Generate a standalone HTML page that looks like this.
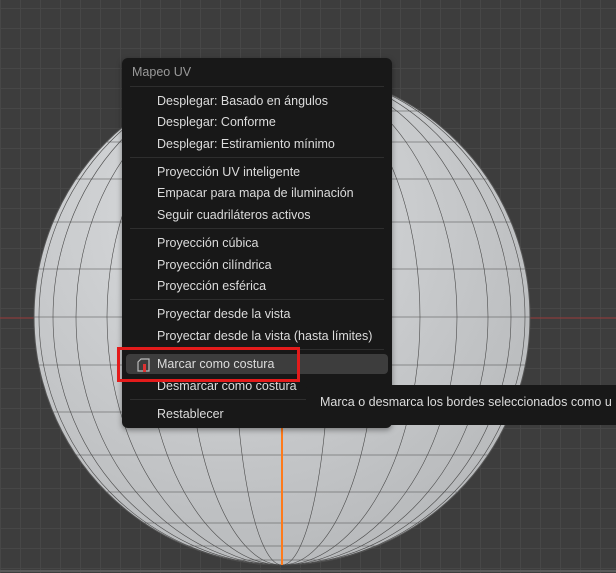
<!DOCTYPE html>
<html><head><meta charset="utf-8"><style>
html,body{margin:0;padding:0}
body{width:616px;height:573px;overflow:hidden;position:relative;background:#3d3d3d;font-family:"Liberation Sans","DejaVu Sans",sans-serif;
background-image:linear-gradient(#474747 1px,transparent 1px),linear-gradient(90deg,#474747 1px,transparent 1px);background-size:20px 20px;background-position:0 8px}
svg{position:absolute;left:0;top:0}
.menu{position:absolute;left:122px;top:58px;width:270px;height:370px;background:#181818;border-radius:6px;box-shadow:0 2px 6px rgba(0,0,0,.4)}
.t{position:absolute;left:10px;top:7px;font-size:12.5px;color:#9a9a9a}
.it{position:absolute;left:35px;font-size:12.5px;color:#dcdcdc;line-height:16px}
.sep{position:absolute;left:8px;right:8px;height:1px;background:#2e2e2e}
.hl{position:absolute;left:4px;right:4px;top:296px;height:20px;background:#3d3d3d;border-radius:4px}
.red{position:absolute;left:117px;top:347px;width:177px;height:29px;border:3px solid #e31b1b}
.tip{position:absolute;left:306px;top:385px;width:320px;height:40px;background:#181818;border-radius:5px;font-size:12.5px;color:#dcdcdc}
.tip span{position:absolute;left:14px;top:10px;white-space:nowrap}
</style></head><body>
<svg width="616" height="573">
<defs><radialGradient id="g" cx="0.4" cy="0.3" r="0.8"><stop offset="0" stop-color="#dcdee0"/><stop offset="1" stop-color="#b4b6b8"/></radialGradient></defs>
<line x1="0" y1="318" x2="616" y2="318" stroke="#9a3a3a" stroke-width="1"/>
<circle cx="282" cy="317" r="248" fill="url(#g)" stroke="#555" stroke-width="1"/>
<g fill="none" stroke="#4a4a4a" stroke-width="0.6">
<ellipse cx="282" cy="317" rx="48" ry="248"/><ellipse cx="282" cy="317" rx="95" ry="248"/>
<ellipse cx="282" cy="317" rx="138" ry="248"/><ellipse cx="282" cy="317" rx="175" ry="248"/>
<ellipse cx="282" cy="317" rx="206" ry="248"/><ellipse cx="282" cy="317" rx="229" ry="248"/>
<ellipse cx="282" cy="317" rx="243" ry="248"/>
<line x1="39" y1="269" x2="525" y2="269"/><line x1="39" y1="365" x2="525" y2="365"/>
<line x1="53" y1="222" x2="511" y2="222"/><line x1="53" y1="412" x2="511" y2="412"/>
<line x1="76" y1="179" x2="488" y2="179"/><line x1="76" y1="455" x2="488" y2="455"/>
<line x1="107" y1="142" x2="457" y2="142"/><line x1="107" y1="492" x2="457" y2="492"/>
<line x1="144" y1="111" x2="420" y2="111"/><line x1="144" y1="523" x2="420" y2="523"/>
<line x1="187" y1="88" x2="377" y2="88"/><line x1="187" y1="546" x2="377" y2="546"/>
<line x1="234" y1="74" x2="330" y2="74"/><line x1="234" y1="560" x2="330" y2="560"/>
<line x1="34" y1="317" x2="530" y2="317"/>
</g>
<line x1="282" y1="317" x2="282" y2="565" stroke="#ff7a1a" stroke-width="2"/>
<line x1="0" y1="571" x2="616" y2="571" stroke="#5a5a5a" stroke-width="2"/>
</svg>
<div class="menu">
<div class="t">Mapeo UV</div>
<div class="sep" style="top:28px"></div>
<div class="it" style="top:35px">Desplegar: Basado en ángulos</div>
<div class="it" style="top:56px">Desplegar: Conforme</div>
<div class="it" style="top:78px">Desplegar: Estiramiento mínimo</div>
<div class="sep" style="top:99px"></div>
<div class="it" style="top:106px">Proyección UV inteligente</div>
<div class="it" style="top:127px">Empacar para mapa de iluminación</div>
<div class="it" style="top:149px">Seguir cuadriláteros activos</div>
<div class="sep" style="top:170px"></div>
<div class="it" style="top:177px">Proyección cúbica</div>
<div class="it" style="top:199px">Proyección cilíndrica</div>
<div class="it" style="top:220px">Proyección esférica</div>
<div class="sep" style="top:241px"></div>
<div class="it" style="top:248px">Proyectar desde la vista</div>
<div class="it" style="top:270px">Proyectar desde la vista (hasta límites)</div>
<div class="sep" style="top:291px"></div>
<div class="hl"></div>
<svg width="20" height="20" style="left:12px;top:297px"><path d="M4 16V7l3-3h8v12z" fill="none" stroke="#bbb" stroke-width="1.2"/><rect x="9" y="9" width="3" height="8" fill="#d33"/></svg>
<div class="it" style="top:298px">Marcar como costura</div>
<div class="it" style="top:320px">Desmarcar como costura</div>
<div class="sep" style="top:341px"></div>
<div class="it" style="top:348px">Restablecer</div>
</div>
<div class="red"></div>
<div class="tip"><span>Marca o desmarca los bordes seleccionados como u</span></div>
</body></html>
